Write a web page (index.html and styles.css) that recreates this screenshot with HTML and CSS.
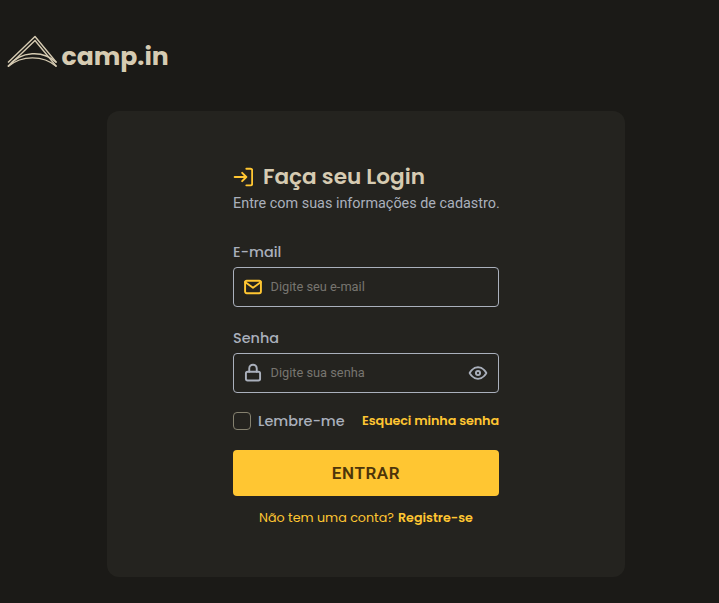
FILE: index.html
```html
<!DOCTYPE html>
<html lang="pt-BR">
<head>
<meta charset="utf-8">
<title>camp.in</title>
<link rel="stylesheet" href="styles.css">
</head>
<body>
<header class="header">
  <svg class="logo-mark" width="50" height="34" viewBox="0 0 50 34" fill="none" stroke="currentColor" stroke-width="1.4" stroke-linejoin="round">
    <path d="M1 27.500L28 1.500L49.500 27.500"/>
    <path d="M1 31.500L28 5.500L49.500 31.500"/>
    <path d="M1 31.500C14 15.500 36 15 49.500 27.500"/>
    <path d="M1 31.500C15 20 36 20 49.500 31.500"/>
  </svg>
  <span class="logo-name">camp.in</span>
</header>
<main class="card">
  <div class="title-row">
    <svg class="icon title-icon" width="20" height="20" viewBox="0 0 24 24"><path d="M16 2h5a2 2 0 0 1 2 2v16a2 2 0 0 1-2 2h-5M11 17l5-5-5-5M15 12H2"/></svg>
    <h1 class="title">Faça seu Login</h1>
  </div>
  <p class="subtitle">Entre com suas informações de cadastro.</p>
  <form class="form">
    <label class="label label-email" for="email">E-mail</label>
    <div class="field">
      <svg class="icon icon-mail" width="20" height="20" viewBox="0 0 24 24"><rect x="2.500" y="4.500" width="19" height="15" rx="2"/><path d="M21.500 6L12 13L2.500 6"/></svg>
      <input class="input" id="email" type="email" placeholder="Digite seu e-mail">
    </div>
    <label class="label label-password" for="password">Senha</label>
    <div class="field">
      <svg class="icon" width="20" height="20" viewBox="0 0 24 24"><rect x="3.500" y="10.500" width="17" height="10.500" rx="2"/><path d="M7.500 10.500V6.500a4.500 4.500 0 0 1 9 0v4"/></svg>
      <input class="input" id="password" type="password" placeholder="Digite sua senha">
      <svg class="icon icon-eye" width="20" height="20" viewBox="0 0 24 24"><path d="M2 12s3.500-7 10-7 10 7 10 7-3.500 7-10 7-10-7-10-7z"/><circle cx="12" cy="12" r="2.500"/></svg>
    </div>
    <div class="options">
      <label class="remember"><input class="checkbox" type="checkbox"><span class="remember-text">Lembre-me</span></label>
      <a class="forgot">Esqueci minha senha</a>
    </div>
    <button class="submit" type="button">ENTRAR</button>
    <p class="register"><span class="question">Não tem uma conta?</span><a class="register-link">Registre-se</a></p>
  </form>
</main>
</body>
</html>
```

FILE: styles.css
```css
* { box-sizing: border-box; margin: 0; }
body { background: #1b1a17; color: #aab0bc; font-family: Poppins, Inter, sans-serif; overflow: hidden; }
.header { display: flex; height: 111px; padding: 35px 0 0 7px; color: #d6cbb2; }
.logo-mark { flex: none; }
.logo-name { margin-left: 4.5px; padding-top: 1px; font-size: 25.1px; line-height: 42px; font-weight: 700; white-space: nowrap; }
.card { width: 518px; height: 466px; margin-left: 107px; padding: 49px 126px 0; border-radius: 12px; background: #24231f; }
.title-row { display: flex; align-items: center; height: 34px; gap: 10px; }
.icon { flex: none; fill: none; stroke: currentColor; stroke-width: 2.3; stroke-linecap: round; stroke-linejoin: round; }
.title-icon, .icon-mail { color: #ffc632; }
.title { color: #d6cbb2; font-size: 21.6px; line-height: 34px; font-weight: 600; white-space: nowrap; }
.subtitle { font: 400 14.4px/19px Roboto, sans-serif; white-space: nowrap; }
.label { display: block; width: max-content; font-size: 14.4px; line-height: 22px; font-weight: 500; }
.label-email { margin: 28px 0 4px; }
.label-password { margin: 20px 0 4px; }
.field { display: flex; align-items: center; height: 40px; padding: 0 10px 0 9px; gap: 7.5px; border: 1px solid #aab0bc; border-radius: 4px; }
.input { flex: 1; min-width: 0; padding: 0; border: 0; outline: 0; background: none; color: inherit; font: 400 12.8px/18px Roboto, sans-serif; }
.input::placeholder { color: #77756f; }
.options { display: flex; align-items: center; justify-content: space-between; height: 22px; margin-top: 17px; }
.remember { display: flex; align-items: center; gap: 7px; font-size: 14.4px; font-weight: 500; }
.checkbox { appearance: none; width: 18px; height: 18px; border: 1px solid #85816f; border-radius: 4px; }
.forgot { color: #ffc632; font-size: 12.8px; font-weight: 600; letter-spacing: -0.12px; white-space: nowrap; }
.submit { display: block; width: 100%; height: 46px; margin-top: 18px; padding: 0; border: 0; border-radius: 4px; background: #ffc632; color: #4d350a; font: 600 17px/20px Roboto, sans-serif; letter-spacing: 0.6px; }
.register { display: flex; justify-content: center; gap: 4px; margin-top: 12px; color: #ffc632; font-size: 12.7px; line-height: 20px; white-space: nowrap; }
.register-link { font-weight: 600; }
```
